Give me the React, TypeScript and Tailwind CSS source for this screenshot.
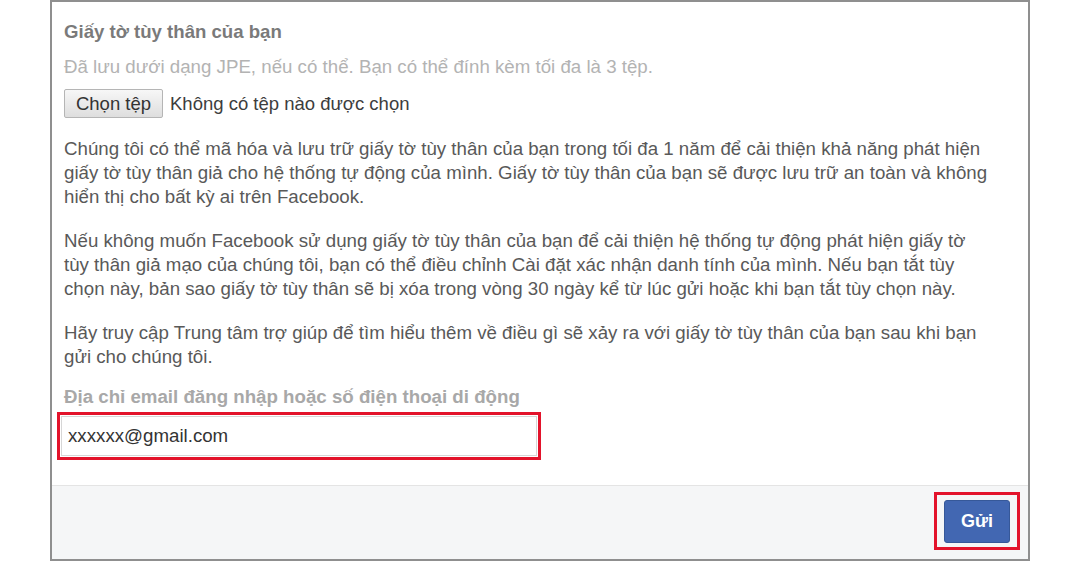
import React from "react";

const FONT = { fontFamily: '"Liberation Sans", Arial, sans-serif' };

function FileRow() {
  return (
    <div className="mt-[11px] flex items-center gap-[7px]">
      <button className="h-[29px] w-[99px] rounded-[2px] border border-[#b5b5b5] bg-gradient-to-b from-[#f7f7f7] to-[#dedede] text-[18.5px] text-[#333]">
        Chọn tệp
      </button>
      <span className="text-[18.5px] text-[#3d3d3d]">Không có tệp nào được chọn</span>
    </div>
  );
}

export default function App() {
  return (
    <div className="h-[562px] w-[1080px] bg-white" style={FONT}>
      <div className="ml-[50px] flex h-[561px] w-[980px] flex-col border-2 border-[#8f8f8f]">
        <div className="flex-1 px-[12px] pt-[19px]">
          <h2 className="text-[18.6px] font-bold leading-[22px] text-[#7a7a7a]">Giấy tờ tùy thân của bạn</h2>
          <p className="mt-[13px] text-[18.7px] leading-[22px] text-[#b3b3b3]">
            Đã lưu dưới dạng JPE, nếu có thể. Bạn có thể đính kèm tối đa là 3 tệp.
          </p>
          <FileRow />
          <div className="mt-[19px] space-y-[20px] text-[18.7px] leading-[24px] text-[#595959]">
            <p>
              Chúng tôi có thể mã hóa và lưu trữ giấy tờ tùy thân của bạn trong tối đa 1 năm để cải thiện khả năng phát hiện
              <br />
              giấy tờ tùy thân giả cho hệ thống tự động của mình. Giấy tờ tùy thân của bạn sẽ được lưu trữ an toàn và không
              <br />
              hiển thị cho bất kỳ ai trên Facebook.
            </p>
            <p>
              Nếu không muốn Facebook sử dụng giấy tờ tùy thân của bạn để cải thiện hệ thống tự động phát hiện giấy tờ
              <br />
              tùy thân giả mạo của chúng tôi, bạn có thể điều chỉnh Cài đặt xác nhận danh tính của mình. Nếu bạn tắt tùy
              <br />
              chọn này, bản sao giấy tờ tùy thân sẽ bị xóa trong vòng 30 ngày kể từ lúc gửi hoặc khi bạn tắt tùy chọn này.
            </p>
            <p>
              Hãy truy cập Trung tâm trợ giúp để tìm hiểu thêm về điều gì sẽ xảy ra với giấy tờ tùy thân của bạn sau khi bạn
              <br />
              gửi cho chúng tôi.
            </p>
          </div>
          <label className="mt-[17px] block text-[18.7px] font-bold leading-[22px] text-[#a8a8a8]">
            Địa chỉ email đăng nhập hoặc số điện thoại di động
          </label>
          <div className="-ml-[7px] mt-[4px] w-[484px] border-[3px] border-[#e3132b] p-[1px]">
            <div className="flex h-[40px] items-center border border-[#d6d6d6] bg-white px-[6px] text-[18.7px] text-[#333]">
              xxxxxx@gmail.com
            </div>
          </div>
        </div>
        <div className="flex h-[74px] justify-end border-t border-[#e4e4e4] bg-[#f5f6f7] pr-[8px] pt-[6px]">
          <div className="h-[58px] border-[3px] border-[#e3132b] px-[7px] pb-[4px] pt-[5px]">
            <button className="h-[43px] w-[66px] rounded-[3px] border border-[#365899] bg-[#4267b2] text-[18px] font-bold text-white">
              Gửi
            </button>
          </div>
        </div>
      </div>
    </div>
  );
}
